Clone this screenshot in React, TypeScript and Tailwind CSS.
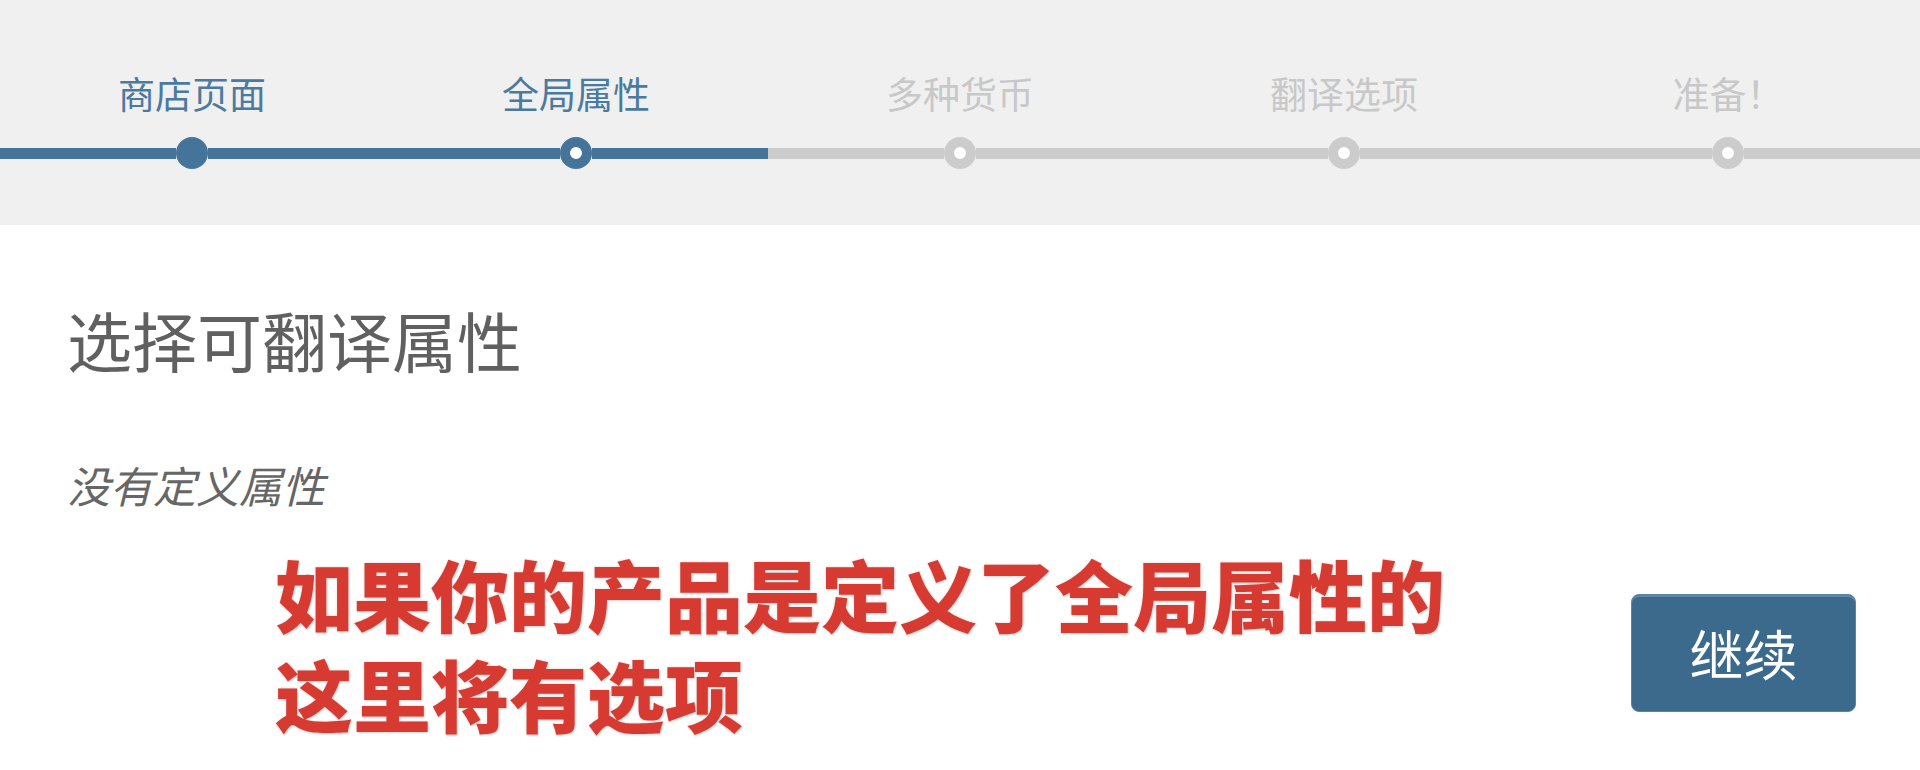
const steps = [
  { label: '商店页面', state: 'done' },
  { label: '全局属性', state: 'current' },
  { label: '多种货币', state: 'todo' },
  { label: '翻译选项', state: 'todo' },
  { label: '准备！', state: 'todo' },
]

const font = { fontFamily: '"Noto Sans CJK SC", "Noto Sans", sans-serif' }

function Dot({ state }: { state: string }) {
  if (state === 'done') {
    return <div className="w-[32px] h-[32px] rounded-full bg-[#44749a] shrink-0" />
  }
  if (state === 'current') {
    return <div className="w-[32px] h-[32px] rounded-full border-[10px] border-[#44749a] bg-white shrink-0" />
  }
  return <div className="w-[32px] h-[32px] rounded-full border-[10px] border-[#cccccc] bg-white shrink-0" />
}

export default function App() {
  return (
    <div className="w-[1920px] h-[770px] bg-white overflow-hidden" style={font}>
      {/* Wizard progress */}
      <div className="h-[225px] bg-[#f0f0f0] grid grid-cols-5 pt-[68px]">
        {steps.map((s, i) => {
          const active = s.state !== 'todo'
          const blue = i <= 1
          return (
            <div key={i} className="flex flex-col items-center">
              <div
                className={`text-[37px] leading-[50px] h-[50px] ${active ? 'text-[#4a7aa0]' : 'text-[#c8c8c8]'}`}
              >
                {s.label}
              </div>
              <div className="w-full flex items-center mt-[19px]">
                <div className={`flex-1 h-[11px] ${blue ? 'bg-[#44749a]' : 'bg-[#cccccc]'}`} />
                <Dot state={s.state} />
                <div className={`flex-1 h-[11px] ${blue ? 'bg-[#44749a]' : 'bg-[#cccccc]'}`} />
              </div>
            </div>
          )
        })}
      </div>

      {/* Content */}
      <div className="pl-[67px] pr-[64px]">
        <h1 className="text-[65px] leading-[80px] text-[#606060] mt-[74px]">选择可翻译属性</h1>
        <p className="text-[43px] leading-[56px] italic text-[#666666] mt-[77px]">没有定义属性</p>

        <div className="flex items-start justify-between mt-[31px]">
          <div className="ml-[208px] text-[78px] leading-[100px] font-black text-[#d63a30] [text-shadow:0_0_2px_#e6e6e6,0_0_3px_#dddddd,1px_1px_2px_#d8d8d8]">
            如果你的产品是定义了全局属性的
            <br />
            这里将有选项
          </div>
          <button className="mt-[51px] w-[225px] h-[118px] rounded-[8px] bg-[#3c6a8d] border border-[#5a84a4] text-white text-[54px] leading-none shadow-[inset_0_2px_0_#5b87a8]">
            继续
          </button>
        </div>
      </div>
    </div>
  )
}
